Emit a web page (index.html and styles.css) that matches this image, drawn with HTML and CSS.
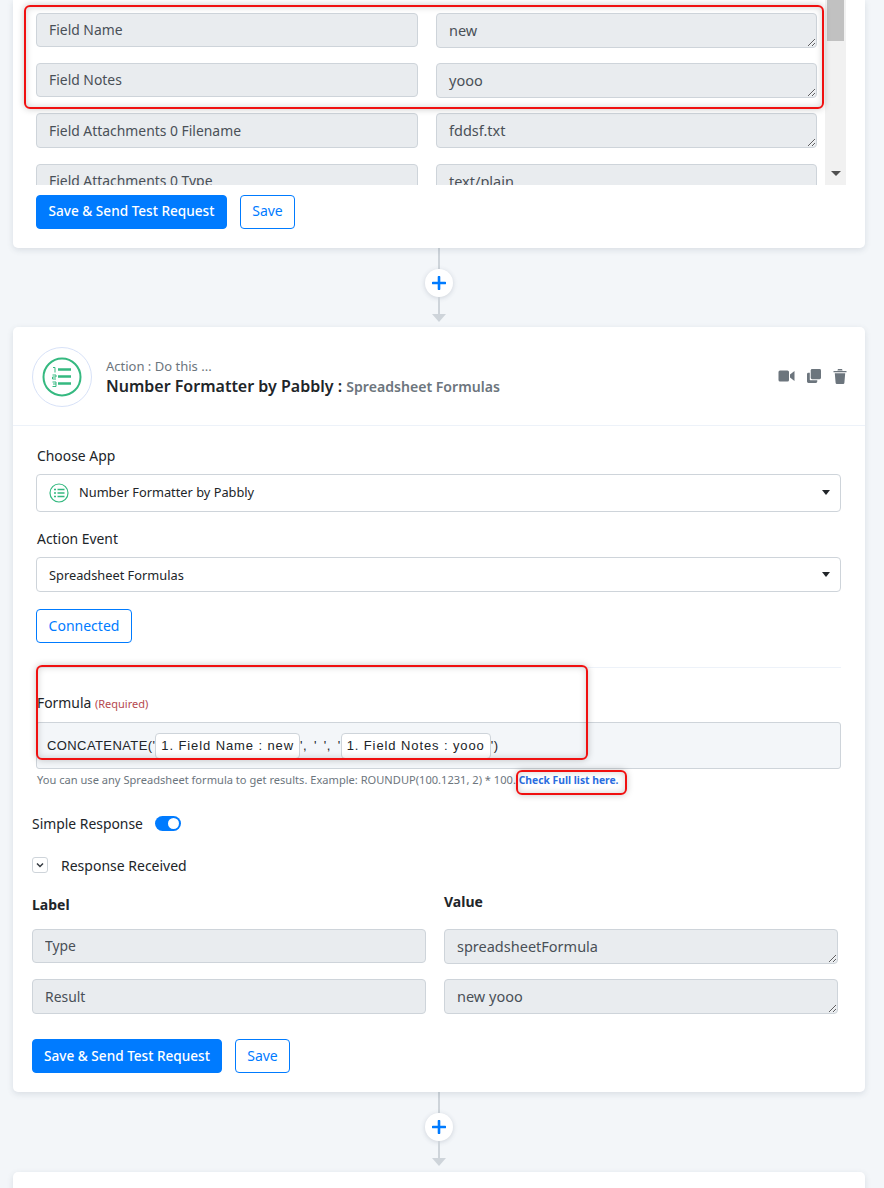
FILE: index.html
```html
<!DOCTYPE html>
<html lang="en">
<head>
<meta charset="utf-8">
<title>Workflow</title>
<link rel="stylesheet" href="styles.css">
</head>
<body>
<div class="page">
  <section class="card card-first">
    <div class="scroller">
      <div class="rows">
        <div class="row"><input class="field" readonly value="Field Name"><textarea class="area" readonly>new</textarea></div>
        <div class="row"><input class="field" readonly value="Field Notes"><textarea class="area" readonly>yooo</textarea></div>
        <div class="row"><input class="field field-tall" readonly value="Field Attachments 0 Filename"><textarea class="area" readonly>fddsf.txt</textarea></div>
        <div class="row"><input class="field" readonly value="Field Attachments 0 Type"><textarea class="area" readonly>text/plain</textarea></div>
      </div>
      <div class="scrollbar"><div class="thumb"></div><div class="arrow-down"></div></div>
    </div>
    <div class="actions actions-first">
      <button class="btn btn-primary">Save &amp; Send Test Request</button>
      <button class="btn btn-outline">Save</button>
    </div>
  </section>

  <div class="connector">
    <div class="line line-top"></div>
    <div class="plus"><svg width="14" height="14" viewBox="0 0 14 14"><path d="M7 1v12M1 7h12" stroke="#007bff" stroke-width="2.6" stroke-linecap="round"/></svg></div>
    <div class="line line-bottom"></div>
    <div class="arrow"></div>
  </div>

  <section class="card">
    <header class="head">
      <div class="logo">
        <svg width="40" height="40" viewBox="0 0 40 40" fill="none">
          <circle cx="20" cy="20" r="18.500" stroke="#35b980" stroke-width="2"/>
          <path d="M16 12.500h13M16 19.500h13M16 26.500h13" stroke="#35b980" stroke-width="2.400"/>
          <path d="M11 10.500h2v5M10.500 18h3.500v2h-3.500v2h3.500M10.500 25h3.500v4.500h-3.500M11 27h3" stroke="#35b980" stroke-width="1"/>
        </svg>
      </div>
      <div class="titles">
        <div class="kicker">Action : Do this ...</div>
        <div class="title">Number Formatter by Pabbly : <span class="subtitle">Spreadsheet Formulas</span></div>
      </div>
      <div class="tools">
        <svg width="17" height="12" viewBox="0 0 16 12"><rect x="0" y="0.500" width="10.500" height="11" rx="1.500" fill="#6c757d"/><path d="M11.500 4.500 16 1v10l-4.500-3.500z" fill="#6c757d"/></svg>
        <svg width="14" height="14" viewBox="0 0 15 15"><rect x="4" y="0" width="11" height="11" rx="1.500" fill="#6c757d"/><path d="M0 5.500A1.500 1.500 0 0 1 1.500 4H3v7.500A.5.5 0 0 0 3.500 12H11v1.500A1.500 1.500 0 0 1 9.500 15h-8A1.500 1.500 0 0 1 0 13.500z" fill="#6c757d"/></svg>
        <svg width="14" height="15" viewBox="0 0 13 15"><path d="M0 2h13v1.300H0zM4.500 0h4l.6 1.400H3.900z" fill="#6c757d"/><path d="M1.300 4.300h10.400l-.8 9.500a1.300 1.300 0 0 1-1.300 1.200H3.400a1.300 1.300 0 0 1-1.300-1.200z" fill="#6c757d"/></svg>
      </div>
    </header>

    <div class="body">
      <label class="label label-app">Choose App</label>
      <div class="select select-app">
        <svg width="20" height="20" viewBox="0 0 40 40" fill="none">
          <circle cx="20" cy="20" r="18" stroke="#35b980" stroke-width="2.400"/>
          <path d="M17 13h14M17 20h14M17 27h14" stroke="#35b980" stroke-width="3"/>
          <path d="M10 13h4M10 20h4M10 27h4" stroke="#35b980" stroke-width="3"/>
        </svg>
        <span class="select-text">Number Formatter by Pabbly</span>
        <span class="caret"></span>
      </div>
      <label class="label label-event">Action Event</label>
      <div class="select select-event">
        <span class="select-text">Spreadsheet Formulas</span>
        <span class="caret"></span>
      </div>
      <button class="btn btn-outline btn-connected">Connected</button>
      <hr class="rule">
      <div class="formula-label">Formula <span class="required">(Required)</span></div>
      <div class="formula">CONCATENATE('<span class="chip">1. Field Name : new</span>', ' ', '<span class="chip">1. Field Notes : yooo</span>')</div>
      <p class="hint">You can use any Spreadsheet formula to get results. Example: ROUNDUP(100.1231, 2) * 100. <a class="hint-link">Check Full list here.</a></p>
    </div>

    <div class="response">
      <div class="simple"><span>Simple Response</span><span class="toggle"><span class="knob"></span></span></div>
      <div class="received">
        <span class="chev"><svg width="10" height="10" viewBox="0 0 10 10"><path d="M2 3.500 5 6.500 8 3.500" fill="none" stroke="#343a40" stroke-width="1.500"/></svg></span>
        <span>Response Received</span>
      </div>
      <div class="grid-head"><strong class="h-label">Label</strong><strong class="h-value">Value</strong></div>
      <div class="row row-wide"><input class="field" readonly value="Type"><textarea class="area" readonly>spreadsheetFormula</textarea></div>
      <div class="row row-wide"><input class="field field-tall" readonly value="Result"><textarea class="area" readonly>new yooo</textarea></div>
      <div class="actions actions-second">
        <button class="btn btn-primary">Save &amp; Send Test Request</button>
        <button class="btn btn-outline">Save</button>
      </div>
    </div>

    <div class="mark mark-one"></div>
    <div class="mark mark-two"></div>
    <div class="mark mark-three"></div>
  </section>

  <div class="connector connector-low">
    <div class="line line-top"></div>
    <div class="plus"><svg width="14" height="14" viewBox="0 0 14 14"><path d="M7 1v12M1 7h12" stroke="#007bff" stroke-width="2.6" stroke-linecap="round"/></svg></div>
    <div class="line line-bottom"></div>
    <div class="arrow"></div>
  </div>

  <section class="card card-last"></section>
</div>
</body>
</html>
```
FILE: styles.css
```css
* { box-sizing: border-box; }
html, body { margin: 0; padding: 0; height: 1188px; overflow: hidden; }
body { background: #f3f6f9; font-family: "Noto Sans", sans-serif; color: #212529; font-size: 14px; }
.page { padding: 0 19px 0 13px; }
.card { background: #fff; border-radius: 5px; box-shadow: 0 2px 6px rgba(60, 75, 100, .14); position: relative; }
.card-first { border-radius: 0 0 5px 5px; height: 248px; padding: 0 19px 0 23px; }
.card-last { height: 40px; }

.scroller { display: flex; height: 185px; overflow: hidden; }
.rows { width: 781px; padding-top: 13px; }
.row { display: flex; gap: 18px; margin-bottom: 15px; }
.field, .area {
  display: block; height: 35px; background: #e9ecef; border: 1px solid #ced4da; border-radius: 4px;
  font: 14.500px "Noto Sans", sans-serif; color: #495057; padding: 0 12px; margin: 0; outline: none;
}
.field { width: 382px; height: 34px; font-size: 13.900px; padding-bottom: 2px; }
.field.field-tall { height: 35px; padding-bottom: 1px; }
.area { width: 381px; padding: 6px 12px; resize: both; overflow: hidden; }
.rows .row:nth-child(3) { margin-bottom: 16px; }

.scrollbar { width: 21px; margin-left: 8px; background: #f1f1f1; position: relative; flex: none; padding: 0 2px; }
.thumb { height: 41px; background: #c1c1c1; }
.arrow-down { position: absolute; left: 6px; top: 171px; border: 5px solid transparent; border-top: 5px solid #505050; border-bottom: 0; }

.actions { display: flex; gap: 13px; }
.actions-first { margin-top: 10px; }
.btn { height: 34px; border-radius: 4px; font: 14px "Noto Sans", sans-serif; padding: 0 0 3px; }
.btn-primary { background: #007bff; border: 1px solid #007bff; color: #fff; font-size: 13.600px; font-weight: 500; width: 191px; }
.btn-outline { background: #fff; border: 1px solid #007bff; color: #007bff; width: 55px; }

.connector { height: 79px; display: flex; flex-direction: column; align-items: center; padding-right: 1px; }
.connector-low { height: 80px; }
.line { width: 2px; background: #ced4da; }
.line-top { height: 21px; }
.line-bottom { height: 17px; }
.plus { width: 28px; height: 28px; border-radius: 50%; background: #fff; box-shadow: 0 1px 5px rgba(60, 75, 100, .2); display: flex; align-items: center; justify-content: center; flex: none; }
.arrow { border: 7px solid transparent; border-top: 8px solid #ced4da; border-bottom: 0; }

.head { height: 99px; border-bottom: 1px solid #edf2f9; display: flex; align-items: center; padding: 0 18px 0 19px; }
.logo { width: 60px; height: 60px; border-radius: 50%; border: 1px solid #d8e2f8; display: flex; align-items: center; justify-content: center; margin-top: 1px; flex: none; }
.titles { margin-left: 14px; flex: 1; padding-top: 5px; }
.kicker { font-size: 13px; color: #6c757d; line-height: 16px; }
.title { font-size: 16px; font-weight: 600; line-height: 25px; color: #212529; }
.subtitle { font-size: 14.100px; color: #6c757d; }
.tools { display: flex; align-items: center; gap: 12px; }

.body { padding: 0 24px 0 23px; }
.label { display: block; font-size: 13.900px; line-height: 20px; padding-left: 1px; }
.label-app { padding-top: 20px; }
.select { display: flex; align-items: center; border: 1px solid #ced4da; border-radius: 4px; background: #fff; padding: 0 12px 2px; font-size: 12.800px; }
.select-app { height: 38px; margin-top: 8px; }
.select-event { height: 35px; margin-top: 8px; padding-bottom: 0; }
.select-text { flex: 1; }
.select-app svg { margin-right: 10px; margin-top: 2px; }
.caret { border: 4.500px solid transparent; border-top: 5px solid #212529; border-bottom: 0; margin-right: -2px; }
.label-event { margin-top: 17px; }
.btn.btn-connected { display: block; width: 96px; margin-top: 17px; font-size: 14px; padding-bottom: 1px; }
.rule { border: 0; border-top: 1px solid #edf2f9; margin: 24px 0 0; }
.formula-label { margin-top: 25px; font-size: 13.900px; line-height: 20px; padding-left: 1px; }
.required { font-size: 11px; color: #b5484f; }
.formula { margin-top: 8px; height: 47px; background: #f3f6f9; border: 1px solid #ced4da; border-radius: 3px; display: flex; align-items: center; padding: 0 10px; font: 13px "Liberation Sans", sans-serif; white-space: pre; letter-spacing: .4px; word-spacing: 3px; }
.chip { background: #fff; border: 1px solid #ced4da; border-radius: 4px; height: 26px; line-height: 24px; padding: 0 5px; letter-spacing: .9px; word-spacing: 0; }
.hint { margin: 3px 0 0; padding-left: 1px; font-size: 11.100px; line-height: 15px; color: #6c757d; }
.hint-link { color: #2a6de0; font-weight: 700; font-size: 10.300px; }

.response { padding: 0 27px 0 19px; }
.simple { display: flex; align-items: center; gap: 12px; margin-top: 25px; height: 20px; font-size: 13.900px; }
.toggle { display: block; width: 26px; height: 15px; border-radius: 8px; background: #007bff; position: relative; }
.knob { position: absolute; right: 2px; top: 2px; width: 11px; height: 11px; border-radius: 50%; background: #fff; }
.received { display: flex; align-items: center; gap: 13px; margin-top: 22px; height: 20px; font-size: 14px; }
.chev { width: 16px; height: 16px; border: 1px solid #ced4da; border-radius: 3px; display: flex; align-items: center; justify-content: center; }
.grid-head { display: flex; margin-top: 17px; height: 24px; font-size: 14px; }
.h-label { width: 412px; padding-top: 3px; }
.row-wide { margin-bottom: 15px; }
.row-wide .field { width: 394px; }
.row-wide .area { width: 394px; height: 35px; }
.grid-head + .row-wide { margin-top: 13px; }
.actions-second { margin-top: 25px; padding-bottom: 19px; }
.actions-second .btn-primary { width: 190px; }
.actions-second .btn { padding-bottom: 1px; }

.mark { position: absolute; border: 2px solid #f01010; border-radius: 6px; pointer-events: none; box-shadow: 0 0 7px rgba(0, 0, 0, .22), inset 0 0 7px rgba(0, 0, 0, .18); }
.mark-one { left: 11px; top: -322px; width: 800px; height: 104px; }
.mark-two { left: 23px; top: 338px; width: 552px; height: 95px; }
.mark-three { left: 503px; top: 443px; width: 111px; height: 25px; }
```
